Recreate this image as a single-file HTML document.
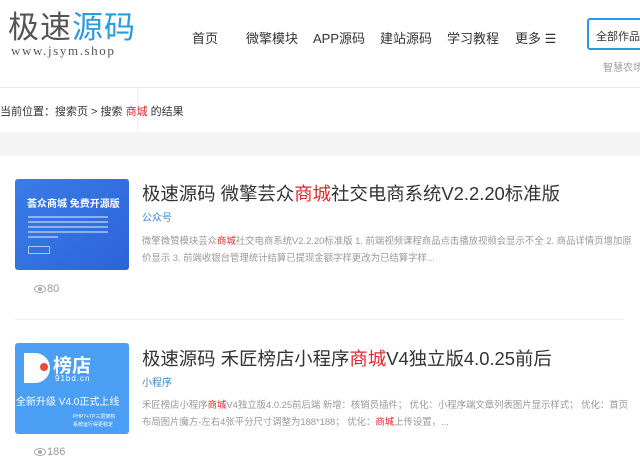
<!DOCTYPE html>
<html><head><meta charset="utf-8"><style>
*{margin:0;padding:0;box-sizing:border-box}
body{width:640px;height:474px;overflow:hidden;background:#fff;font-family:"Liberation Sans","Noto Sans CJK SC",sans-serif;position:relative;color:#333}
.a{position:absolute;white-space:nowrap}
.nav{font-size:13px;color:#333;top:28px}
.t{font-size:18.4px;color:#333;left:142px}
.t b,.d b{color:#e4262b;font-weight:normal}
.tag{font-size:10px;color:#3a86c8;left:142px}
.d{font-size:9.4px;color:#999;left:142px;line-height:17px}
.v{font-size:11px;color:#999;left:34px}
.eye{display:inline-block;width:12px;height:8px;border:1.5px solid #aaa;border-radius:50%;position:relative;vertical-align:middle;margin-right:1px}
.eye:after{content:"";position:absolute;left:2.5px;top:0.5px;width:4px;height:4px;background:#aaa;border-radius:50%}
.ln{position:absolute;height:2px;background:rgba(255,255,255,.45)}
</style></head><body>
<div class="a" style="left:8px;top:10px;font-size:31px;line-height:36px;letter-spacing:1px"><span style="color:#555">极速</span><span style="color:#2a9be0">源码</span></div>
<div class="a" style="left:11px;top:44px;font-family:'Liberation Serif',serif;font-size:13px;line-height:14px;color:#555;letter-spacing:1.6px">www.jsym.shop</div>
<div class="a nav" style="left:192px">首页</div>
<div class="a nav" style="left:246px">微擎模块</div>
<div class="a nav" style="left:313px">APP源码</div>
<div class="a nav" style="left:380px">建站源码</div>
<div class="a nav" style="left:447px">学习教程</div>
<div class="a nav" style="left:515px">更多 ☰</div>
<div class="a" style="left:587px;top:18px;width:60px;height:32px;border:2px solid #2a9be0;border-radius:3px;font-size:11px;color:#333;padding:8px 0 0 7px">全部作品</div>
<div class="a" style="left:603px;top:59px;font-size:10px;color:#999">智慧农场</div>
<div class="a" style="left:0;top:87px;width:640px;height:1px;background:#e8e8e8"></div>
<div class="a" style="left:137px;top:88px;width:1px;height:44px;background:#f0f0f0"></div>
<div class="a" style="left:0;top:103px;font-size:11px;color:#333">当前位置：搜索页 &gt; 搜索 <span style="color:#e4262b">商城</span> 的结果</div>
<div class="a" style="left:0;top:132px;width:640px;height:24px;background:#f4f4f4"></div>

<div class="a" style="left:15px;top:179px;width:114px;height:91px;background:linear-gradient(135deg,#3a7ce8,#2c64d8);border-radius:3px">
 <div class="a" style="left:12px;top:16px;font-size:10px;color:#fff;font-weight:bold">荟众商城 免费开源版</div>
 <div class="ln" style="left:13px;top:37px;width:80px"></div>
 <div class="ln" style="left:13px;top:42px;width:80px"></div>
 <div class="ln" style="left:13px;top:47px;width:80px"></div>
 <div class="ln" style="left:13px;top:52px;width:80px"></div>
 <div class="ln" style="left:13px;top:57px;width:30px"></div>
 <div class="a" style="left:13px;top:67px;width:22px;height:8px;border:1px solid rgba(255,255,255,.6)"></div>
</div>
<div class="a t" style="top:180px">极速源码 微擎芸众<b>商城</b>社交电商系统V2.2.20标准版</div>
<div class="a tag" style="top:209px">公众号</div>
<div class="a d" style="top:232px">微擎微赞模块芸众<b>商城</b>社交电商系统V2.2.20标准版 1. 前端视频课程商品点击播放视频会显示不全 2. 商品详情页增加原<br>价显示 3. 前端收银台管理统计结算已提现金额字样更改为已结算字样...</div>
<div class="a v" style="top:283px"><span class="eye"></span>80</div>
<div class="a" style="left:15px;top:319px;width:609px;height:1px;background:#eee"></div>

<div class="a" style="left:15px;top:343px;width:114px;height:91px;background:#4a9ff5;border-radius:3px;overflow:hidden">
 <div class="a" style="left:9px;top:10px;width:26px;height:30px;background:#fff;border-radius:0 15px 15px 0"></div>
 <div class="a" style="left:25px;top:20px;width:8px;height:8px;background:#e84a3c;border-radius:50%"></div>
 <div class="a" style="left:38px;top:8px;font-size:19px;color:#fff;font-weight:bold">榜店</div>
 <div class="a" style="left:40px;top:31px;font-size:8px;color:#fff;letter-spacing:1px">91bd.cn</div>
 <div class="a" style="left:1px;top:50px;font-size:10px;color:#fff">全新升级 V4.0正式上线</div>
 <div class="a" style="left:58px;top:70px;font-size:5px;color:#fff;line-height:8px">PHP7+TP三层架构<br>系统运行得更稳定</div>
</div>
<div class="a t" style="top:345px">极速源码 禾匠榜店小程序<b>商城</b>V4独立版4.0.25前后</div>
<div class="a tag" style="top:374px">小程序</div>
<div class="a d" style="top:396px">禾匠榜店小程序<b>商城</b>V4独立版4.0.25前后端 新增：核销员插件； 优化：小程序端文章列表图片显示样式； 优化：首页<br>布局图片魔方-左右4张平分尺寸调整为188*188； 优化：<b>商城</b>上传设置，...</div>
<div class="a v" style="top:446px"><span class="eye"></span>186</div>
</body></html>
